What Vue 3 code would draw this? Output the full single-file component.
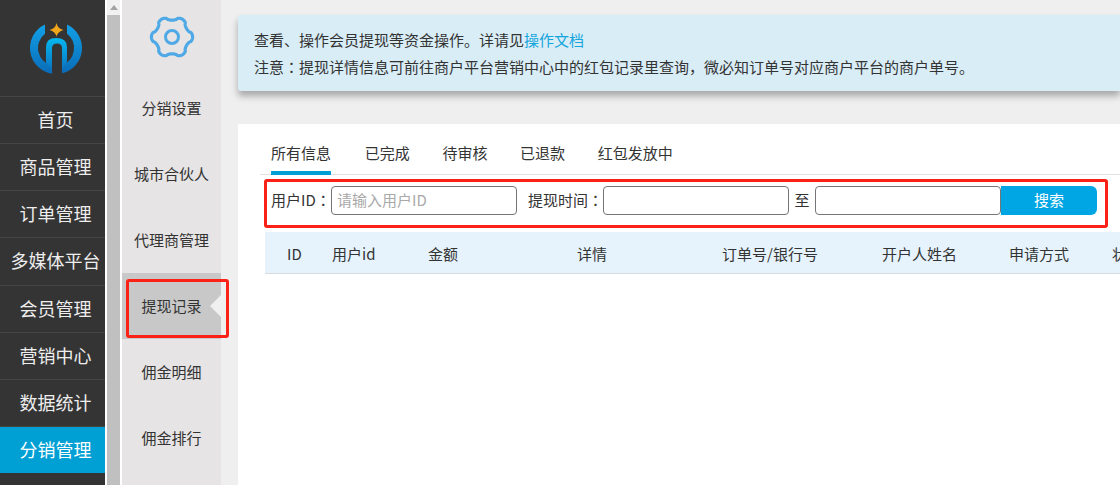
<script setup>
import { computed } from 'vue'

const mainNav = ['首页', '商品管理', '订单管理', '多媒体平台', '会员管理', '营销中心', '数据统计', '分销管理']
const subNav = ['分销设置', '城市合伙人', '代理商管理', '提现记录', '佣金明细', '佣金排行']
const tabs = ['所有信息', '已完成', '待审核', '已退款', '红包发放中']
const columns = [
  { label: 'ID', width: 45 },
  { label: '用户id', width: 96 },
  { label: '金额', width: 149 },
  { label: '详情', width: 145 },
  { label: '订单号/银行号', width: 160 },
  { label: '开户人姓名', width: 127 },
  { label: '申请方式', width: 103 },
  { label: '状态', width: 60 }
]

const gearPath = computed(() => {
  const pts = []
  for (let i = 0; i < 240; i++) {
    const t = (i / 240) * Math.PI * 2
    const c = Math.cos(6 * t)
    const r = 18.7 + 1.9 * Math.sign(c) * Math.pow(Math.abs(c), 0.6)
    pts.push(`${(24 + r * Math.cos(t)).toFixed(2)} ${(24 + r * Math.sin(t)).toFixed(2)}`)
  }
  return 'M' + pts.join('L') + 'Z'
})
</script>

<template>
  <div class="page">
    <aside class="main-nav">
      <div class="logo">
        <svg width="60" height="60" viewBox="0 0 60 60">
          <defs>
            <linearGradient id="ring" x1="0" y1="0" x2="0" y2="1">
              <stop offset="0" stop-color="#12a0e6" />
              <stop offset="1" stop-color="#0a6cb8" />
            </linearGradient>
            <linearGradient id="arch" x1="0" y1="0" x2="0" y2="1">
              <stop offset="0" stop-color="#05b8f0" />
              <stop offset="1" stop-color="#0a78c4" />
            </linearGradient>
          </defs>
          <path d="M15 6.440A26 26 0 0 0 22 55.700V47.550A18 18 0 0 1 15 15.750Z" fill="url(#ring)" />
          <path d="M37 6.440A26 26 0 0 1 32 55.300V47A18 18 0 0 0 37 15.750Z" fill="url(#ring)" />
          <path d="M16 45V29Q16 20 26 20Q37 20 37 29V44L32 50V30Q32 25.500 27 25.500Q22 25.500 22 30V50Z" fill="url(#arch)" />
          <path d="M26.500 5Q27.500 10.500 33.500 12Q27.500 13.500 26.500 19Q25.500 13.500 19.500 12Q25.500 10.500 26.500 5Z" fill="#f2a71b" />
        </svg>
      </div>
      <a
        v-for="(item, i) in mainNav"
        :key="item"
        class="main-item"
        :class="{ active: i === mainNav.length - 1 }"
      >{{ item }}</a>
    </aside>

    <div class="scrollbar">
      <span class="arrow"></span>
      <span class="thumb"></span>
    </div>

    <nav class="sub-nav">
      <div class="gear">
        <svg width="48" height="48" viewBox="0 0 48 48" fill="none" stroke="#4fa9e6">
          <path :d="gearPath" stroke-width="3.200" stroke-linejoin="round" />
          <circle cx="24" cy="24" r="6.500" stroke-width="3" />
        </svg>
      </div>
      <a
        v-for="(item, i) in subNav"
        :key="item"
        class="sub-item"
        :class="{ active: i === 3 }"
      >
        {{ item }}
        <template v-if="i === 3">
          <i class="notch"></i>
          <i class="mark"></i>
        </template>
      </a>
    </nav>

    <main class="main">
      <section class="notice">
        <p>查看、操作会员提现等资金操作。详请见<a class="link">操作文档</a></p>
        <p>注意<span class="colon">：</span>提现详情信息可前往商户平台营销中心中的红包记录里查询，微必知订单号对应商户平台的商户单号。</p>
      </section>

      <section class="panel">
        <div class="tabs">
          <span
            v-for="(tab, i) in tabs"
            :key="tab"
            class="tab"
            :class="{ current: i === 0 }"
          >{{ tab }}</span>
        </div>

        <div class="filter">
          <label class="label">用户ID<span class="colon">：</span></label>
          <input class="field" type="text" placeholder="请输入用户ID" />
          <label class="label time">提现时间<span class="colon">：</span></label>
          <input class="field" type="text" />
          <span class="to">至</span>
          <input class="field" type="text" />
          <button class="search" type="button">搜索</button>
        </div>

        <div class="thead">
          <span
            v-for="col in columns"
            :key="col.label"
            class="th"
            :style="{ width: col.width + 'px' }"
          >{{ col.label }}</span>
        </div>
      </section>
    </main>
  </div>
</template>

<style scoped>
.page {
  display: flex;
  width: 1120px;
  height: 485px;
  overflow: hidden;
  background: #fff;
  font-family: "Noto Sans CJK SC", "Open Sans", sans-serif;
  font-size: 15px;
  color: #333;
}
.colon {
  font-family: "Noto Sans CJK TC", sans-serif;
}

.main-nav {
  flex: none;
  width: 105px;
  height: 485px;
  background: #343434;
}
.logo {
  height: 96px;
  padding: 18px 0 0 30px;
  box-sizing: border-box;
}
.logo svg {
  display: block;
}
.main-item {
  display: block;
  height: 47.125px;
  line-height: 45px;
  box-sizing: border-box;
  padding-left: 6px;
  border-top: 1px solid #454545;
  text-align: center;
  font-size: 18px;
  color: #eee;
  white-space: nowrap;
}
.main-item.active {
  background: #009fd4;
  background-clip: padding-box;
  color: #fff;
}

.scrollbar {
  flex: none;
  display: flex;
  flex-direction: column;
  width: 13px;
  margin: 0 2px;
  background: #f1f1f1;
}
.arrow {
  flex: none;
  width: 0;
  height: 0;
  margin: 5px auto 5px;
  border-left: 4px solid transparent;
  border-right: 4px solid transparent;
  border-bottom: 5px solid #a3a3a3;
}
.thumb {
  flex: 1;
  background: #c0c0c0;
}

.sub-nav {
  flex: none;
  width: 99px;
  height: 485px;
  background: #e6e4e4;
}
.gear {
  display: flex;
  justify-content: center;
  height: 75px;
  padding-top: 13px;
  box-sizing: border-box;
}
.gear svg {
  display: block;
}
.sub-item {
  position: relative;
  display: block;
  height: 66px;
  line-height: 66px;
  text-align: center;
  color: #333;
  white-space: nowrap;
}
.sub-item.active {
  background: #c8c8c8;
}
.notch {
  position: absolute;
  right: 0;
  top: 22px;
  width: 0;
  height: 0;
  border-top: 11px solid transparent;
  border-bottom: 11px solid transparent;
  border-right: 11px solid #f0f0f0;
}
.mark {
  position: absolute;
  left: 4px;
  top: 6px;
  width: 103px;
  height: 59px;
  box-sizing: border-box;
  border: 3px solid #fb2116;
  border-radius: 3px;
}

.main {
  flex: 1;
  min-width: 0;
  background: #efefef;
  padding: 15px 0 0 17px;
}
.notice {
  height: 76px;
  box-sizing: border-box;
  padding: 11px 16px;
  background: #d9edf7;
  border-radius: 3px 0 0 3px;
  box-shadow: 0 5px 7px rgba(0, 0, 0, 0.3);
  white-space: nowrap;
}
.notice p {
  margin: 0;
  line-height: 27px;
}
.link {
  color: #14a5dc;
}

.panel {
  height: 361px;
  margin-top: 33px;
  padding-left: 22px;
  background: #fff;
}
.tabs {
  display: flex;
  gap: 32.700px;
  height: 51px;
  box-sizing: border-box;
  padding: 15px 0 0 11px;
  border-bottom: 1px solid #e2e2e2;
}
.tab {
  height: 35px;
  line-height: 27px;
  box-sizing: border-box;
}
.tab.current {
  height: 36px;
  margin-right: 1px;
  border-bottom: 4px solid #009fd4;
}

.filter {
  display: flex;
  align-items: flex-start;
  width: 844px;
  height: 49px;
  margin: 4px 0 4px 4px;
  padding: 4px 0 0 4px;
  box-sizing: border-box;
  border: 3px solid #fb2116;
  border-radius: 3px;
}
.label {
  flex: none;
  width: 60px;
  line-height: 28px;
  white-space: nowrap;
}
.label.time {
  width: 75px;
  margin-left: 11px;
}
.field {
  flex: none;
  width: 186px;
  height: 29px;
  padding: 0 5px 2px;
  box-sizing: border-box;
  border: 1px solid #767676;
  border-radius: 4px;
  background: #fff;
  font: inherit;
  color: #333;
  outline: none;
}
.field::placeholder {
  color: #a9a9a9;
}
.to {
  flex: none;
  width: 26px;
  line-height: 28px;
  text-align: center;
}
.search {
  flex: none;
  width: 96px;
  height: 29px;
  padding: 0 0 2px;
  border: 0;
  border-radius: 0 6px 6px 0;
  background: #00a6e4;
  color: #fff;
  font: inherit;
}

.thead {
  display: flex;
  height: 42px;
  box-sizing: border-box;
  margin-left: 5px;
  padding-left: 22px;
  background: #e6f3fd;
  border-bottom: 1px solid #d8dde0;
  overflow: hidden;
}
.th {
  flex: none;
  line-height: 44px;
  white-space: nowrap;
}
</style>

<style>
html,
body {
  margin: 0;
  overflow: hidden;
}
</style>
